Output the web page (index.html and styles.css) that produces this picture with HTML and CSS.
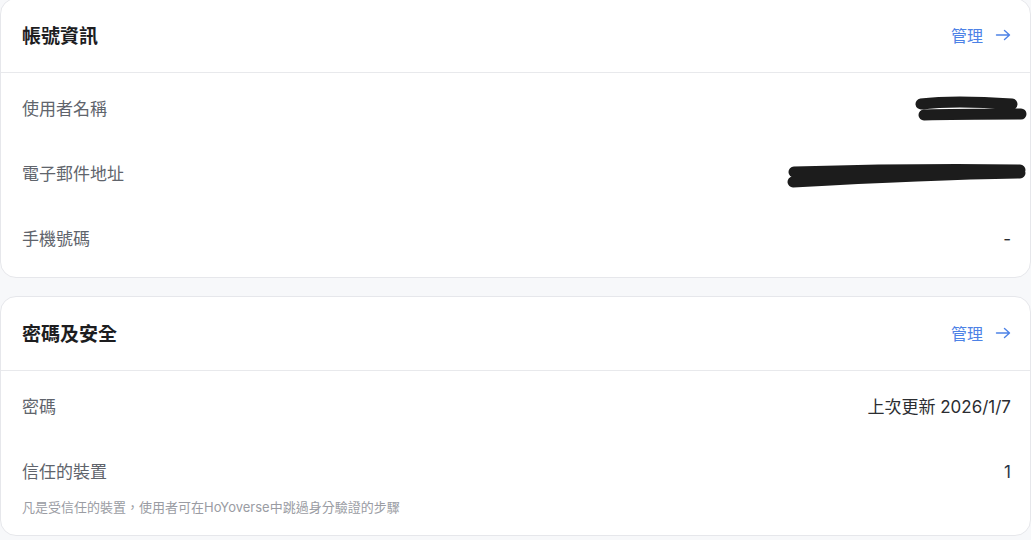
FILE: index.html
```html
<!DOCTYPE html>
<html>

<head>
  <title>帳號設定</title>
  <meta charset="UTF-8">
  <link rel="stylesheet" href="styles.css">
</head>

<body>
  <div class="page">

    <div class="card">
      <div class="cardHead">
        <h2>帳號資訊</h2>
        <a class="manage" href="#">管理
          <svg width="16" height="16" viewBox="0 0 16 16"><path d="M1.5 8h13M9.5 3.5l5 4.5-5 4.5" fill="none" stroke="currentColor" stroke-width="1.4" stroke-linecap="round" stroke-linejoin="round"/></svg>
        </a>
      </div>
      <div class="cardBody">
        <div class="row">
          <span class="label">使用者名稱</span>
          <svg class="redact redactName" width="114" height="30" viewBox="0 0 114 30">
            <path d="M7 9 C30 6 70 7 98 9 M10 20 C40 19 80 19 107 19" fill="none" stroke="#1c1c1c" stroke-width="11" stroke-linecap="round"/>
          </svg>
        </div>
        <div class="row">
          <span class="label">電子郵件地址</span>
          <svg class="redact redactMail" width="244" height="30" viewBox="0 0 244 30">
            <path d="M9 12 C80 10 170 9 235 10 M8 22 C80 18 170 14 235 13" fill="none" stroke="#1c1c1c" stroke-width="11" stroke-linecap="round"/>
          </svg>
        </div>
        <div class="row">
          <span class="label">手機號碼</span>
          <span class="value">-</span>
        </div>
      </div>
    </div>

    <div class="card">
      <div class="cardHead">
        <h2>密碼及安全</h2>
        <a class="manage" href="#">管理
          <svg width="16" height="16" viewBox="0 0 16 16"><path d="M1.5 8h13M9.5 3.5l5 4.5-5 4.5" fill="none" stroke="currentColor" stroke-width="1.4" stroke-linecap="round" stroke-linejoin="round"/></svg>
        </a>
      </div>
      <div class="cardBody">
        <div class="row">
          <span class="label">密碼</span>
          <span class="value">上次更新 2026/1/7</span>
        </div>
        <div class="row rowDesc">
          <div class="rowLine">
            <span class="label">信任的裝置</span>
            <span class="value count">1</span>
          </div>
          <p class="desc">凡是受信任的裝置，使用者可在HoYoverse中跳過身分驗證的步驟</p>
        </div>
      </div>
    </div>

  </div>
</body>

</html>
```

FILE: styles.css
```css
body {
  margin: 0;
  background-color: #f7f8fa;
  font-family: "Inter", "Noto Sans CJK TC", sans-serif;
}

.page {
  margin-top: -2px;
  display: flex;
  flex-direction: column;
  gap: 18px;
}

.card {
  background-color: #ffffff;
  border: 1px solid #e6e7eb;
  border-radius: 16px;
}

.cardHead {
  height: 71px;
  padding: 0 19px 2px 21px;
  display: flex;
  align-items: center;
  justify-content: space-between;
  border-bottom: 1px solid #e8e9ec;
}

.cardHead h2 {
  margin: 0;
  font-size: 19px;
  font-weight: 700;
  color: #1d1d1f;
}

.manage {
  display: flex;
  align-items: center;
  gap: 12px;
  color: #4d82e6;
  font-size: 16px;
  text-decoration: none;
}

.cardBody {
  padding: 4px 0 5px;
}

.row {
  height: 25px;
  padding: 20px 19px 20px 21px;
  display: flex;
  align-items: center;
  justify-content: space-between;
  line-height: 25px;
}

.label {
  font-size: 17px;
  color: #60646c;
}

.value {
  font-size: 17px;
  color: #2b2d31;
}

.count {
  color: #2a3446;
}

.redact {
  display: block;
}

.redactName {
  margin-right: -17px;
}

.redactMail {
  margin-right: -18px;
}

.rowDesc {
  height: auto;
  padding: 20px 19px 14px 21px;
  flex-direction: column;
  align-items: stretch;
}

.rowLine {
  display: flex;
  justify-content: space-between;
}

.desc {
  margin: 13px 0 0;
  font-size: 13px;
  line-height: 18px;
  color: #9a9ca3;
}
```
